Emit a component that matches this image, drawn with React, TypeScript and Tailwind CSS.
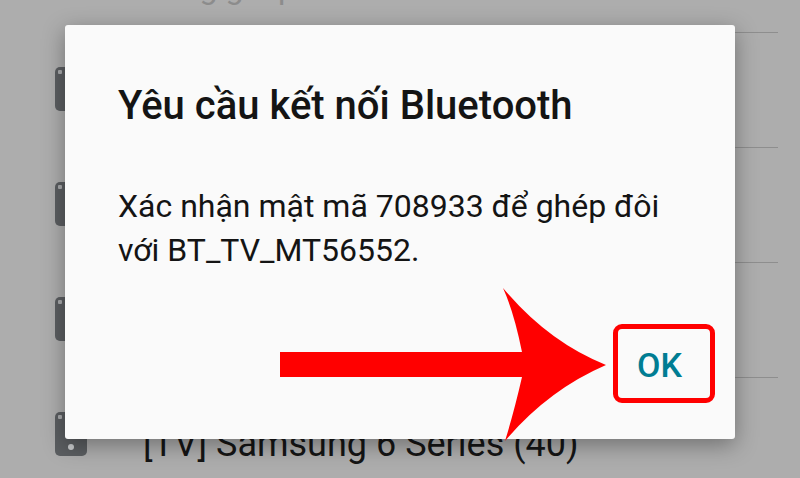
import React from 'react'

const rows = ['Galaxy Tab A', 'Loa JBL Go 2', '[TV] Samsung 5 Series', '[TV] Samsung 6 Series (40)']

function DeviceIcon() {
  return (
    <div className="relative w-[32px] h-[44px] rounded-[5px] bg-[#5b5e61] shrink-0">
      <div className="absolute left-[3px] top-[3px] w-[4px] h-[4px] rounded-[1px] bg-[#a9abad]" />
      <div className="absolute left-[13px] top-[32px] w-[6px] h-[6px] rounded-full bg-[#c9cbcd]" />
    </div>
  )
}

function ArrowMark() {
  return (
    <svg width="340" height="170" viewBox="270 280 340 170" className="block">
      <path
        d="M280 352 L522 352 Q514 312 503 288 Q548 342 606 365 Q548 390 505 441 Q514 412 522 377 L280 377 Z"
        fill="#ff0000"
      />
    </svg>
  )
}

export default function App() {
  return (
    <div className="relative w-[800px] h-[478px] overflow-hidden bg-[#adadad] font-['Roboto','Noto_Sans',sans-serif]">
      {/* list behind the dialog */}
      <div className="h-[32px] flex items-end pl-[143px]">
        <div className="mb-[28px] text-[32px] leading-[32px] text-[#8c8c8c] whitespace-nowrap">
          Đang ghép nối
        </div>
      </div>
      {rows.map((name) => (
        <div key={name} className="h-[115px] flex">
          <div className="pl-[55px] pt-[35px]">
            <DeviceIcon />
          </div>
          <div className="ml-[56px] mr-[22px] flex-1 border-t border-[#8e8e8e]">
            <div className="mt-[48px] text-[36px] leading-[36px] text-[#151515] whitespace-nowrap">{name}</div>
          </div>
        </div>
      ))}

      {/* dialog */}
      <div className="absolute left-[65px] top-[25px] w-[670px] h-[414px] bg-[#fafafa] rounded-[3px] shadow-[0_6px_22px_rgba(0,0,0,0.35)] flex flex-col">
        <div className="pl-[53px] pt-[61px] text-[40px] leading-none font-medium text-[#141414] whitespace-nowrap">
          Yêu cầu kết nối Bluetooth
        </div>
        <div className="pl-[53px] pt-[58px] text-[32px] leading-[44px] text-[#141414]">
          <div>Xác nhận mật mã 708933 để ghép đôi</div>
          <div>với BT_TV_MT56552.</div>
        </div>
        <div className="mt-auto mb-[57px] flex justify-end pr-[53px]">
          <span className="text-[34px] leading-none font-medium text-[#007d93]">OK</span>
        </div>
      </div>

      {/* annotation */}
      <div className="absolute left-[613px] top-[324px] w-[102px] h-[79px] border-[5px] border-[#ff0000] rounded-[9px]" />
      <div className="absolute left-[270px] top-[280px]">
        <ArrowMark />
      </div>
    </div>
  )
}
